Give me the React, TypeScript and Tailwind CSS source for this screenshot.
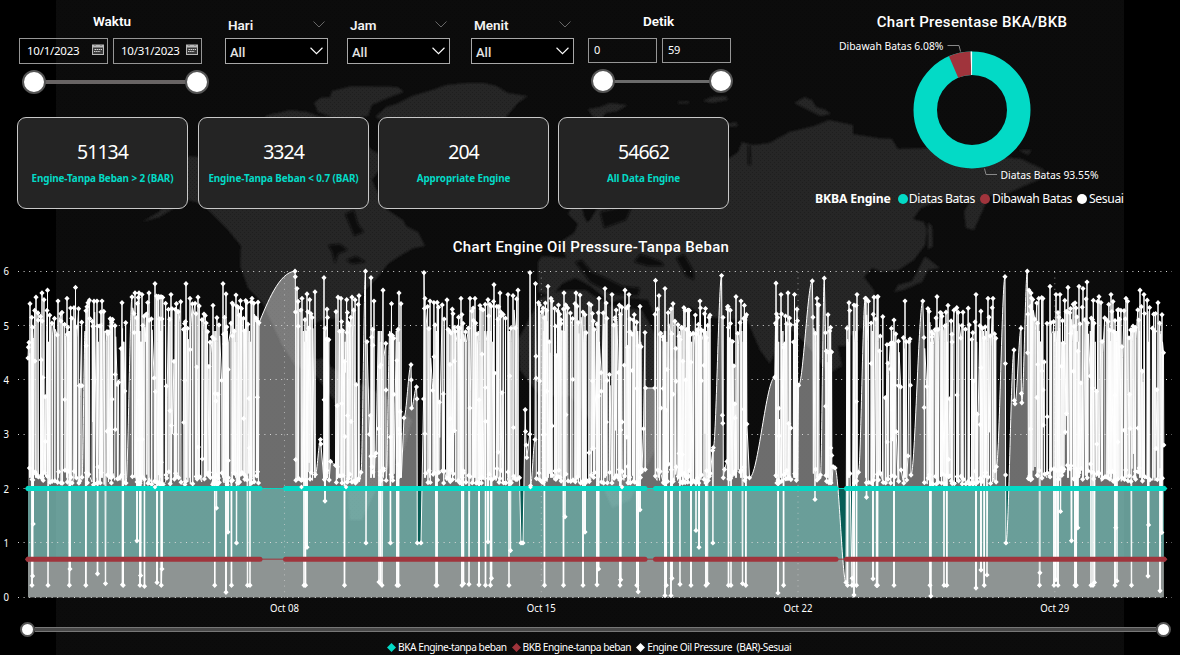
import React from "react";

type Point = [number, number];

const TEAL = "#03dac6";
const RED = "#a0343c";

const yOf = (v: number) => 597.2 - v * 54.33;

/* Dense measurement periods: [start, end, typical top, typical bottom] */
const BURSTS: [number, number, number, number][] = [
  [29, 45.5, 5.4, 2.2], [47, 61, 5.25, 2.15], [62, 84, 5.25, 2.15], [86, 106, 5.4, 2.12], [107, 128.5, 5.25, 2.15],
  [132, 172, 5.48, 2.12], [174, 208, 5.4, 2.12], [209, 228.5, 5.2, 2.12], [231, 258.5, 5.4, 2.15],
  [295.5, 315.5, 5.4, 2.2], [324, 330, 5.2, 2.2], [336, 360, 5.4, 2.15], [370.5, 374, 5, 2.3],
  [380, 387, 4.6, 2.2], [390, 394, 4.8, 2.2], [397, 402, 5, 2.25],
  [424.5, 485.5, 5.35, 2.15], [488, 518.5, 5.45, 2.15], [536, 583, 5.4, 2.15], [585, 641.5, 5.35, 2.15],
  [655, 711, 5.25, 2.15], [727.5, 747.5, 5.3, 2.2], [775.5, 782, 5.25, 2.15], [783.5, 797.5, 5.1, 2.2],
  [813, 819.5, 5.35, 2.2], [825.5, 832, 4.9, 2.15], [847, 850, 5.2, 2.15], [854, 857.5, 5.3, 2.15],
  [866, 886, 5.45, 2.15], [887, 907, 5, 2.15], [924, 996, 5.25, 2.13],
  [1028, 1056, 5.45, 2.2], [1058, 1100, 5.5, 2.22], [1101, 1163, 5.4, 2.18],
];

const PEAKS: Point[] = [
  [30, 5.4], [36, 5.52], [42, 5.6], [47.5, 5.65], [58, 5.45], [67, 5.5], [75.5, 5.7], [88, 5.42], [97, 5.45],
  [102, 5.45], [122, 5.42], [135, 5.6], [139, 5.6], [142, 5.57], [149, 5.6], [155, 5.77], [161, 5.53], [171, 5.57],
  [186, 5.77], [190, 5.5], [198, 5.52], [213, 5.37], [223, 5.77], [226, 5.58], [236, 5.56], [252, 5.5], [258, 5.43],
  [297, 5.68], [302, 5.5], [307, 5.58], [315, 5.62], [324, 5.88], [327, 5.3], [338, 5.52], [341, 5.5], [352, 5.52],
  [359, 5.55], [371, 5.88], [374, 5.45], [383, 5.65], [391.5, 5.4], [399, 5.6], [401, 5.4],
  [425, 5.5], [430, 5.45], [447, 5.47], [461, 5.5], [470, 5.5], [475, 5.5], [494, 5.75], [500, 5.6], [508, 5.57],
  [513, 5.55], [518, 5.65], [548, 5.72], [551, 5.5], [564, 5.6], [576, 5.6], [580, 5.56], [589, 5.4], [599, 5.5],
  [605, 5.68], [612, 5.57], [625, 5.65], [629, 5.57], [640, 5.35], [655.5, 5.83], [659, 5.55], [665, 5.68],
  [673, 5.4], [685, 5.28], [700, 5.45], [709, 5.15], [728, 5.35], [736, 5.53], [741, 5.45], [745, 5.1],
  [776, 5.78], [781, 5.57], [788, 5.6], [794.5, 5.57], [797, 5.3], [817, 5.5], [828, 5.2], [849, 5.42], [857, 5.57],
  [866, 5.5], [874, 5.52], [878, 5.53], [894, 5.1], [905, 5.45], [937, 5.53], [948, 5.37], [962, 5], [976, 5.57],
  [988, 5.5], [993, 5.5], [1029, 5.65], [1031, 5.6], [1050, 5.72], [1056, 5.57], [1060, 5.57], [1068, 5.7],
  [1079, 5.72], [1083, 5.68], [1087, 5.8], [1099, 5.53], [1111, 5.57], [1126, 5.5], [1140, 5.65], [1144, 5.57],
  [1158, 5.42], [1162, 5.2],
];

const DIPS: Point[] = [
  [32, 0.22], [32.6, 0.39], [33.2, 1.35], [48, 0.22], [69.4, 0.22], [70, 0.52], [85.8, 0.22], [97.5, 0.43],
  [105.5, 0.25], [122.5, 0.23], [123.2, 0.22], [137, 1.04], [140, 0.22], [140.6, 0.4], [144.5, 0.2], [157, 0.27],
  [161.3, 0.22], [162, 0.52], [214.7, 0.22], [216.5, 1.64], [226, 0.09], [228, 1.2], [231.5, 0.22], [236.5, 1],
  [247.5, 0.22], [250, 0.22], [304, 0.22], [305.5, 0.22], [307, 0.92], [325, 1.77], [344.5, 0.22], [379, 0.28],
  [380.5, 0.25], [382, 0.22], [390.5, 1], [397, 0.22], [398.5, 0.22], [436, 0.22], [437, 0.22], [462, 0.22],
  [463.5, 0.25], [469, 0.24], [479, 0.23], [485.5, 0.22], [488, 1.02], [490.5, 0.22], [491.5, 0.35], [509, 0.22],
  [510.5, 0.86], [544.5, 0.22], [563.5, 0.22], [565, 1.48], [583, 0.22], [585, 1.2], [597, 0.23], [598.6, 0.52],
  [620, 0.22], [620.7, 0.32], [636.8, 0.22], [638.2, 0.1], [640, 1.61], [665, 0.03], [666.3, 0.22], [671, 0.03],
  [672, 0.35], [680, 0.24], [691, 0.22], [696, 1.23], [699, 0.92], [706, 0.22], [707.5, 0.25], [728.5, 0.22],
  [731, 0.22], [742.5, 0.25], [745.8, 0.22], [778, 0.08], [783.6, 0.22], [815, 1.8], [847.5, 0.22], [854, 0.04],
  [856.5, 0.22], [866.5, 1.84], [873, 0.34], [876.5, 0.22], [877.5, 0.22], [894, 0.22], [930, 0.22], [930.8, 0.02],
  [944, 0.22], [946.8, 0.22], [976, 0.17], [981, 0.5], [984.2, 0.22], [987, 0.41], [1039.5, 0.22], [1039.9, 0.45],
  [1054, 0.22], [1055.8, 0.32], [1058, 0.22], [1060.5, 1.58], [1071.5, 1.04], [1075, 0.22], [1076.3, 0.22],
  [1077.8, 1.28], [1091, 0.22], [1093, 0.22], [1094.5, 0.27], [1115, 0.22], [1115.8, 1.28], [1117, 0.3],
  [1131.5, 0.22], [1148, 0.39], [1148.6, 1.33], [1160, 0.12], [1161.8, 1.19],
];

/* Single readings between the dense periods */
const SPARSE: Point[] = [
  [28, 4.4], [28.4, 4.6], [259, 5.05], [295, 6], [295.3, 5.9], [320.5, 2.9], [320.9, 2.82], [330.5, 2.5], [335.5, 2.43],
  [361, 2.3], [365.5, 6], [366, 1], [367, 4.7], [369.5, 3], [375, 2.6], [376, 2.65], [378.5, 3.1], [404, 3.3],
  [411, 4.28], [411.3, 4], [411.6, 3.48], [416.5, 3.87], [417, 3.65], [417.3, 1], [421, 1], [423.6, 3.65], [424, 5.97],
  [519.5, 2.2], [521, 1], [523, 1], [525.2, 3.45], [525.6, 3.05], [526.2, 2.8], [526.8, 2.57], [529.8, 3], [530, 5.97],
  [530.6, 2.05], [535, 2.9], [535.5, 5.77], [642, 2.35], [643.5, 3.1], [645, 4.87], [645.2, 2.35], [645.5, 3.85],
  [654.8, 3.85], [712.6, 2.7], [712.9, 1], [713.3, 2.75], [721.6, 5.92], [722.4, 3.35], [722.8, 3.2], [723, 5.15],
  [723.3, 2.2], [724.5, 2.35], [727, 2.5], [749.5, 2.2], [774.8, 4.05], [798.6, 3.9], [812.3, 5.82], [820.5, 2.25],
  [824.3, 5.87], [833, 2.4], [835, 2.38], [846, 0.27], [852, 0.22], [852.2, 0.35], [858.5, 2.3], [865.2, 5.5],
  [908, 2.6], [909, 4.7], [910, 4.75], [910.4, 3.9], [911, 2.25], [922.8, 5.45], [996.4, 2.4], [1005, 5.9],
  [1005.4, 4.3], [1005.6, 2.25], [1006, 1], [1014, 4.55], [1014.4, 3.62], [1015, 3.56], [1021, 4.95], [1021.4, 3.75],
  [1021.8, 3.58], [1027.3, 6], [1027.6, 4.5], [1163.5, 4.5], [1163.8, 2.8],
];

function buildSeries() {
  let seed = 20231;
  const rnd = () => {
    seed = (seed * 16807) % 2147483647;
    return seed / 2147483647;
  };
  const pts: Point[] = [...SPARSE];
  const marks: Point[] = [...SPARSE, ...PEAKS, ...DIPS];
  const near = (list: Point[], x: number, d: number) => list.some((p) => Math.abs(p[0] - x) < d);
  for (const [a, b, top, low] of BURSTS) {
    let x = a;
    while (x < b) {
      const hi = rnd() < 0.16 ? top - 0.5 - rnd() * 1.5 : top + 0.08 - Math.pow(rnd(), 1.3) * 0.6;
      const lo = rnd() < 0.08 ? low + rnd() * 1.2 : low - 0.05 + Math.pow(rnd(), 2) * 0.25;
      if (!near(PEAKS, x, 0.4)) {
        pts.push([x, hi]);
        marks.push([x, hi]);
      }
      pts.push([x + 0.35, lo]);
      if (rnd() < 0.8) marks.push([x + 0.35, lo]);
      if (rnd() < 0.26) marks.push([x + 0.2, lo + (hi - lo) * rnd()]);
      const kind = rnd();
      let step = 0.7 + rnd() * 0.7;
      if (kind > 0.62) step = 2 + rnd() * 0.9;
      x += step;
      /* A pause at the lower level opens a dark slot, one at the top a filled slot */
      if (kind > 0.86 && x < b) pts.push([x - 0.3, low]);
      else if (kind > 0.62 && x < b) pts.push([x - step + 0.7, hi - 0.2]);
    }
  }
  for (const [x, v] of PEAKS) {
    pts.push([x - 0.3, 2.2], [x, v], [x + 0.3, 2.2]);
  }
  for (const [x, v] of DIPS) {
    pts.push([x - 0.7, 4.9], [x - 0.2, v], [x + 0.2, v], [x + 0.7, 4.7]);
  }
  pts.sort((p, q) => p[0] - q[0]);
  let line = `M${pts[0][0]} ${yOf(pts[0][1]).toFixed(1)}`;
  for (let i = 1; i < pts.length; i++) {
    const [x0, v0] = pts[i - 1];
    const [x1, v1] = pts[i];
    const y0 = yOf(v0).toFixed(1);
    const y1 = yOf(v1).toFixed(1);
    const dx = x1 - x0;
    if (x0 === 259) line += `C${x0 + 8} 304 ${x1 - 16} 272 ${x1} ${y1}`;
    else if (dx > 3)
      line += `C${(x0 + dx / 3).toFixed(2)} ${y0} ${(x1 - dx / 3).toFixed(2)} ${y1} ${x1.toFixed(2)} ${y1}`;
    else line += `L${x1.toFixed(2)} ${y1}`;
  }
  const area = `${line}L${pts[pts.length - 1][0]} 597.5L${pts[0][0]} 597.5Z`;
  const dots = marks
    .map(([x, v]) => `M${(x - 2.6).toFixed(1)} ${yOf(v).toFixed(1)}l2.6 -2.7l2.6 2.7l-2.6 2.7z`)
    .join("");
  return { line, area, dots };
}

const SERIES = buildSeries();

const LIMIT_RUNS: Point[] = [[28, 260], [285.5, 645], [655.5, 836], [846.5, 1164]];
const TICKS = [0, 1, 2, 3, 4, 5, 6];
const DATES: [string, number][] = [["Oct 08", 284.5], ["Oct 15", 541.3], ["Oct 22", 798], ["Oct 29", 1054.8]];

function LimitLine({ v, color }: { v: number; color: string }) {
  const y = yOf(v);
  return (
    <g stroke={color} fill={color}>
      <path d={`M28 ${y}H1164`} strokeWidth="1" />
      {LIMIT_RUNS.map(([a, b]) => (
        <path key={a} d={`M${a} ${y}H${b}`} strokeWidth="5" strokeLinecap="round" />
      ))}
      <path d={`M25 ${y}l3 -3v6zM1167.5 ${y}l-3.500 -3v6z`} stroke="none" />
    </g>
  );
}

function PressureChart() {
  return (
    <svg className="block h-[360px] w-[1180px]" viewBox="0 258 1180 360">
      <g fill="#fff" fontFamily="'Noto Sans', 'Open Sans', sans-serif" fontSize="10">
        {TICKS.map((t) => (
          <text key={t} x="3.500" y={yOf(t) + 4} textLength="5.500" lengthAdjust="spacingAndGlyphs">
            {t}
          </text>
        ))}
        {DATES.map(([d, x]) => (
          <text key={d} x={x - 14.5} y="612.300" textLength="29" lengthAdjust="spacingAndGlyphs">
            {d}
          </text>
        ))}
      </g>
      <rect x="28" y={yOf(2)} width="1136" height="71" fill={TEAL} fillOpacity="0.4" />
      <rect x="28" y={yOf(0.7)} width="1136" height="38" fill="#444e4b" />
      <path d={SERIES.area} fill="#fff" fillOpacity="0.4" />
      <g stroke="#d8d8d8" strokeWidth="1" strokeDasharray="1 4.600">
        {TICKS.map((t) => (
          <path key={t} d={`M18 ${Math.floor(yOf(t)) + 0.5}H1172`} />
        ))}
        {DATES.map(([d, x]) => (
          <path key={d} d={`M${x} 272V599`} strokeOpacity="0.6" />
        ))}
      </g>
      <path d={SERIES.line} fill="none" stroke="#fff" strokeWidth="1" strokeLinejoin="bevel" />
      <path d={SERIES.dots} fill="#fff" />
      <LimitLine v={2} color={TEAL} />
      <LimitLine v={0.7} color={RED} />
      {[155, 301.5, 346, 530.5, 622].map((x) => (
        <path key={x} d={`M${x - 2.3} 487l2.300 -2.500l2.300 2.500l-2.300 2.500z`} fill="#fff" />
      ))}
    </svg>
  );
}

function WorldBackdrop() {
  return (
    <svg className="absolute inset-0 h-full w-full" viewBox="0 0 1180 655">
      <defs>
        <pattern id="weave" width="4" height="4" patternUnits="userSpaceOnUse">
          <path d="M0 0h1v1h-1zM2 2h1v1h-1z" fill="#000" fillOpacity="0.200" />
        </pattern>
        <filter id="soft"><feGaussianBlur stdDeviation="0.9" /></filter>
        <clipPath id="stage"><rect x="56" y="0" width="1068" height="655" /></clipPath>
      </defs>
      <rect width="1180" height="655" fill="#000" />
      <g clipPath="url(#stage)">
        <rect x="56" width="1068" height="655" fill="#0c0c0c" />
        <g fill="#252525" filter="url(#soft)">
          {/* North and South America */}
          <path d="M180 160L190 156L205 158L240 150L266 116L275 113L300 115L345 118L372 150L388 158L372 180L385 208L403 220L406 226L418 232L425 246L414 248L400 256L388 264L378 277L366 289L358 300L349 318L344 336L340 318L322 320L308 326L303 345L312 360L326 358L330 366L350 380L366 386L392 400L412 420L404 450L386 470L372 498L362 520L350 520L346 480L342 430L334 400L316 376L295 365L282 345L262 302L248 288L240 266L241 246L228 230L210 212L200 203L188 200L160 217L142 222L160 211L164 198L176 184Z" />
          <path d="M314 103L320 98L330 97L332 91L352 86L398 87L404 92L388 98L372 105L368 116L340 120L318 112ZM265 116L290 110L308 112L322 118L306 124L274 122Z" />
          {/* Greenland and Iceland */}
          <path d="M375 117L386 107L396 104L412 96L432 90L446 85L466 83L484 83L497 86L508 93L528 96L518 103L506 117L496 140L478 150L460 168L450 195L440 195L428 178L426 150L400 128ZM495 190L515 184L520 194L505 200Z" />
          {/* Europe, Asia */}
          <path d="M538 262L542 256L566 258L560 242L575 232L590 220L596 210L610 200L624 190L640 168L660 150L690 152L729 158L738 152L742 142L753 145L769 143L789 132L814 126L829 120L853 125L853 134L878 138L892 139L898 149L923 148L945 148L970 150L996 156L1022 159L1045 170L1043 178L1022 187L1007 194L989 196L982 212L974 230L966 228L964 212L970 201L950 202L934 203L921 208L913 219L924 222L927 230L925 245L914 260L899 270L882 272L872 268L864 277L874 290L876 308L866 326L850 336L846 346L838 346L842 366L828 374L816 356L804 342L790 328L780 340L770 364L760 350L748 322L722 318L705 317L688 306L694 324L712 330L692 348L672 352L656 320L648 300L630 298L610 302L590 286L575 278L562 284L552 296L538 292Z" />
          <path d="M568 214L573 203L571 197L580 198L584 216L592 232L572 237L578 224ZM588 109L600 107L610 103L628 105L618 111L606 113L600 120L592 116ZM676 102L688 101L690 103L680 104ZM702 101L712 97L726 96L728 100L712 103ZM794 103L804 97L812 100L816 107L826 110L831 114L820 116L808 110ZM726 124L736 122L738 126L730 127ZM1018 150L1032 150L1028 155ZM928 222L932 226L933 246L928 250ZM925 256L940 268L928 270L922 282L904 290L894 292L898 285L912 281L918 270Z" />
          {/* Africa */}
          <path d="M540 298L562 290L586 290L594 296L612 306L642 310L655 334L668 358L694 362L680 390L658 414L655 450L630 500L612 508L596 470L590 420L570 396L540 396L520 370L518 340Z" />
        </g>
        <g fill="#0c0c0c" filter="url(#soft)">
          <path d="M345 214L354 210L358 224L364 232L354 236L350 226ZM328 245L340 244L348 250L338 254L335 264L332 252ZM346 260L356 256L366 262L352 264ZM634 262L640 254L652 258L662 262L664 266L648 266ZM676 258L684 254L694 272L694 280L686 276ZM600 212L618 208L628 196L634 202L626 220L604 228ZM575 262L582 260L592 272L606 278L622 286L640 288L638 296L612 294L590 282ZM748 145L750 145L751 165L748 165Z" />
        </g>
        <rect x="56" width="1068" height="655" fill="url(#weave)" />
      </g>
    </svg>
  );
}

function CalendarIcon() {
  return (
    <svg className="-mt-[3px] h-[11px] w-3" viewBox="0 0 12 11">
      <path d="M0 0.500h12v10.500h-12z" fill="#b9b9b9" />
      <path d="M1 3.500h10v6.500h-10z" fill="#3c3c3c" />
      <path d="M3 0v2M9 0v2" stroke="#666" />
      <path d="M2.500 5.500h7.500M2 7.500h6.500" stroke="#d0d0d0" strokeDasharray="1.500 0.600" />
    </svg>
  );
}

function Chevron({ className }: { className: string }) {
  return (
    <svg className={className} viewBox="0 0 12 7" fill="none" stroke="currentColor">
      <path d="M0.500 0.500L6 6L11.500 0.500" />
    </svg>
  );
}

function Knob() {
  return <span className="z-10 size-6 shrink-0 rounded-full border-2 border-[#555] bg-white" />;
}

function DateBox({ value }: { value: string }) {
  return (
    <div className="flex h-[26px] w-[89px] items-center justify-between border border-[#969696] pr-[3px] pl-[7px]">
      <span className="text-[11.5px] tracking-[-0.25px]">{value}</span>
      <CalendarIcon />
    </div>
  );
}

function Dropdown({ label, className }: { label: string; className: string }) {
  return (
    <div className={`w-[103px] ${className}`}>
      <div className="mt-[15px] flex h-[23px] justify-between px-[3px]">
        <span className="font-[Roboto] text-[13.5px] leading-[20px] font-semibold text-[#f2f2f2]">{label}</span>
        <Chevron className="mt-[6px] mr-0 h-[7px] w-3 text-[#666]" />
      </div>
      <div className="flex h-[26px] items-center justify-between border border-[#a8a8a8] bg-black pr-[4px] pl-[4px]">
        <span className="pt-[4px] font-[Roboto] text-[13px] font-medium text-[#e4e4e4]">All</span>
        <Chevron className="h-[8px] w-[13px] text-white" />
      </div>
    </div>
  );
}

function StatCard({ value, label, className = "" }: { value: string; label: string; className?: string }) {
  return (
    <div
      className={`flex h-[92px] w-[171px] flex-col items-center rounded-[9px] border border-[#c8c8c8] bg-[#242424] ${className}`}
    >
      <span className="mt-[20px] text-[19.5px] leading-[28px] tracking-[-1px]">{value}</span>
      <span className="mt-[5px] text-[9.9px] leading-[14px] font-bold tracking-[-0.1px] whitespace-nowrap text-[#03dac6]">
        {label}
      </span>
    </div>
  );
}

function Donut() {
  const at = (deg: number, r: number) => {
    const a = (deg * Math.PI) / 180;
    return `${(172 + r * Math.sin(a)).toFixed(2)} ${(75 - r * Math.cos(a)).toFixed(2)}`;
  };
  const wedge = (a: number, b: number) => `M${at(a, 58.5)}A58.5 58.5 0 0 1 ${at(b, 58.5)}L${at(b, 35)}A35 35 0 0 0 ${at(a, 35)}Z`;
  return (
    <svg className="block h-[152px] w-[344px]" viewBox="0 0 344 152">
      <circle cx="172" cy="75" r="46.750" fill="none" stroke={TEAL} strokeWidth="23.500" />
      <path d={wedge(-23.2, -1.3)} fill={RED} />
      <path d={wedge(-1.3, 0.1)} fill="#fff" />
      <path d="M147.500 10.500h11.500l1.500 6M184.500 133.500l1.500 6h11" fill="none" stroke="#888" />
      <g fill="#fff" fontFamily="'Noto Sans', 'Open Sans', sans-serif" fontSize="11.300">
        <text x="39" y="15" textLength="104.500" lengthAdjust="spacingAndGlyphs">Dibawah Batas 6.08%</text>
        <text x="200.500" y="144" textLength="98" lengthAdjust="spacingAndGlyphs">Diatas Batas 93.55%</text>
      </g>
    </svg>
  );
}

function Diamond({ color }: { color: string }) {
  return (
    <svg className="h-[9px] w-[9px]" viewBox="0 0 9 9">
      <path d="M4.500 0L9 4.500L4.500 9L0 4.500Z" fill={color} />
    </svg>
  );
}

export default function App() {
  return (
    <div className="relative h-[655px] w-[1180px] overflow-hidden bg-black font-['Noto_Sans','Open_Sans',sans-serif] text-white">
      <WorldBackdrop />
      <div className="relative flex h-full flex-col">
        <div className="flex h-[236px]">
          <section className="w-[800px]">
            <div className="flex h-[117px]">
              <div className="ml-[19px] w-[190px]">
                <h2 className="mt-[11px] mb-[7px] pr-[4px] text-center font-[Roboto] text-[13.5px] leading-[20px] font-semibold">Waktu</h2>
                <div className="flex gap-[5px]">
                  <DateBox value="10/1/2023" />
                  <DateBox value="10/31/2023" />
                </div>
                <div className="mt-[6px] ml-[3px] flex w-[187px] items-center">
                  <Knob />
                  <span className="-mx-1 h-[4px] flex-1 bg-[#686464]" />
                  <Knob />
                </div>
              </div>
              <Dropdown label="Hari" className="ml-[16px]" />
              <Dropdown label="Jam" className="ml-[19px]" />
              <Dropdown label="Menit" className="ml-[21px]" />
              <div className="ml-[14px] w-[145px]">
                <h2 className="mt-[11px] mb-[7px] pr-[4px] text-center font-[Roboto] text-[13.5px] leading-[20px] font-semibold">Detik</h2>
                <div className="flex gap-[5px] text-[11px]">
                  <div className="flex h-[25px] w-[69px] items-center border border-[#969696] pl-[5px]">0</div>
                  <div className="flex h-[25px] w-[69px] items-center border border-[#969696] pl-[5px] tracking-[-0.3px]">59</div>
                </div>
                <div className="mt-[6px] ml-[3px] flex w-[142px] items-center">
                  <Knob />
                  <span className="-mx-1 h-[3px] flex-1 bg-[#6b6b6b]" />
                  <Knob />
                </div>
              </div>
            </div>
            <div className="ml-[17px] flex gap-[9px]">
              <StatCard value="51134" label="Engine-Tanpa Beban > 2 (BAR)" className="mr-[1px]" />
              <StatCard value="3324" label="Engine-Tanpa Beban < 0.7 (BAR)" />
              <StatCard value="204" label="Appropriate Engine" />
              <StatCard value="54662" label="All Data Engine" />
            </div>
          </section>
          <section className="w-[344px]">
            <h2 className="mt-[11px] h-[24px] text-center font-[Roboto] text-[15px] leading-[22px] font-medium tracking-[0.3px]">
              Chart Presentase BKA/BKB
            </h2>
            <Donut />
            <div className="mt-[3px] ml-[15px] flex h-[18px] items-center text-[12.2px] leading-[18px] tracking-[-0.4px] whitespace-nowrap">
              <span className="mr-[7px] font-bold tracking-[-0.13px]">BKBA Engine</span>
              <span className="mr-[1px] size-[10px] rounded-full bg-[#03dac6]" />
              <span className="mr-[5px]">Diatas Batas</span>
              <span className="mr-[2px] size-[10px] rounded-full bg-[#a0343c]" />
              <span className="mr-[5px]">Dibawah Batas</span>
              <span className="mr-[2px] size-[10px] rounded-full bg-white" />
              <span>Sesuai</span>
            </div>
          </section>
        </div>
        <h2 className="h-[22px] text-center font-[Roboto] text-[15px] leading-[22px] font-medium tracking-[0.35px]">
          <span className="ml-[2px]">Chart Engine Oil Pressure-Tanpa Beban</span>
        </h2>
        <PressureChart />
        <div className="mt-[4px] ml-[20px] flex w-[1151px] items-center">
          <span className="size-[15px] rounded-full border-2 border-[#555] bg-white" />
          <span className="h-[5px] flex-1 border-y border-[#777] bg-[#484848]" />
          <span className="size-[15px] rounded-full border-2 border-[#555] bg-white" />
        </div>
        <div className="mt-[3px] ml-[387px] flex h-[14px] items-center text-[10.2px] leading-[14px] tracking-[-0.47px] whitespace-nowrap">
          <Diamond color={TEAL} />
          <span className="mr-[5px] ml-[2px]">BKA Engine-tanpa beban</span>
          <Diamond color={RED} />
          <span className="mr-[5px] ml-[2px]">BKB Engine-tanpa beban</span>
          <Diamond color="#fff" />
          <span className="ml-[2px] tracking-[-0.43px] whitespace-pre">Engine Oil Pressure  (BAR)-Sesuai</span>
        </div>
      </div>
    </div>
  );
}
